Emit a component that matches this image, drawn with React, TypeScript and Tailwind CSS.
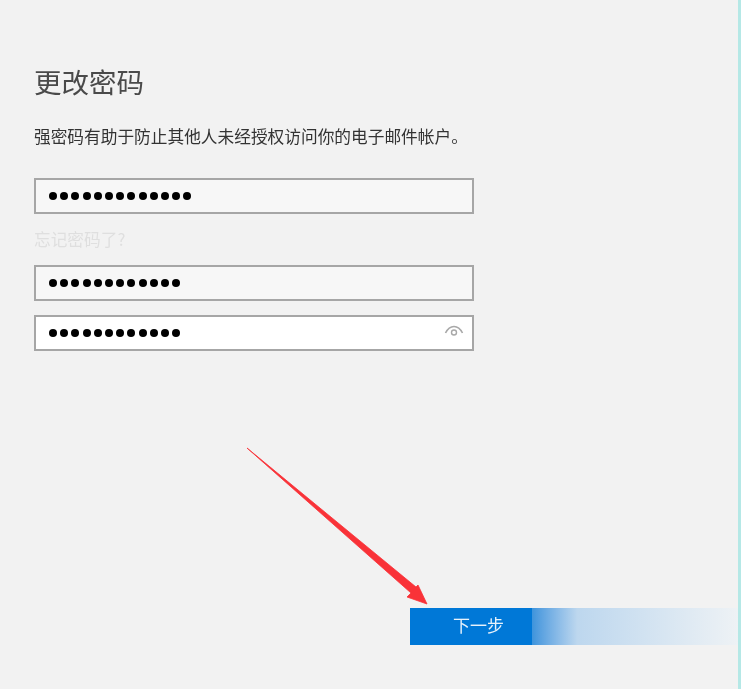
const font = { fontFamily: '"Noto Sans CJK SC", "Liberation Sans", sans-serif' }

function Dots({ count }: { count: number }) {
  return (
    <div className="flex gap-[3.2px]">
      {Array.from({ length: count }).map((_, i) => (
        <span key={i} className="w-[8px] h-[8px] rounded-full bg-black" />
      ))}
    </div>
  )
}

function Field({ count, bg, eye }: { count: number; bg: string; eye?: boolean }) {
  return (
    <div className={`relative w-[440px] h-[36px] border-2 border-[#a6a6a6] flex items-center pl-[13px] ${bg}`}>
      <Dots count={count} />
      {eye && (
        <svg className="absolute right-[8px] top-[8px]" width="20" height="14" viewBox="0 0 20 14" fill="none" stroke="#a8a8a8">
          <path d="M1.5 8C4 3 7 1.5 10 1.5s6 1.500 8.500 6.500" strokeWidth="1.600" />
          <circle cx="10" cy="7.500" r="2.500" strokeWidth="1.400" />
        </svg>
      )}
    </div>
  )
}

export default function App() {
  return (
    <div className="relative w-[742px] h-[689px] bg-[#f2f2f2] flex overflow-hidden blur-[0.5px]" style={font}>
      <div className="w-[738px] flex flex-col pl-[34px]">
        <h1 className="mt-[61px] text-[27.500px] leading-[40px] font-normal text-[#4a4a4a]">更改密码</h1>
        <p className="mt-[23px] text-[16.700px] leading-[24px] text-[#333333] whitespace-nowrap">
          强密码有助于防止其他人未经授权访问你的电子邮件帐户。
        </p>
        <div className="mt-[30px]">
          <Field count={13} bg="bg-[#f7f7f7]" />
        </div>
        <a className="mt-[14px] text-[16.700px] leading-[22px] text-[#dfdfdf]">忘记密码了?</a>
        <div className="mt-[15px] flex flex-col gap-[14px]">
          <Field count={12} bg="bg-[#f7f7f7]" />
          <Field count={12} bg="bg-white" eye />
        </div>
        <div className="mt-[257px] ml-[376px] flex h-[37px]">
          <button className="w-[122px] h-full bg-[#0078d7] text-[#e8f2fb] text-[17px] flex items-center justify-center pl-[15px] pb-[3px]">
            下一步
          </button>
          <div className="w-[206px] h-full bg-gradient-to-r from-[#3d94dc] via-[#bdd7ee] via-[22%] to-[#eef2f5]" />
        </div>
      </div>
      <div className="w-[3px] h-full bg-[#b5e8e6]" />
      <div className="flex-1 h-full bg-white" />
      <svg className="absolute left-0 top-0" width="742" height="689" viewBox="0 0 742 689">
        <polygon points="247,448 411,593 407,597 427,604 418,585 416,587" fill="#f93238" stroke="#f93238" strokeWidth="0.800" />
      </svg>
    </div>
  )
}
